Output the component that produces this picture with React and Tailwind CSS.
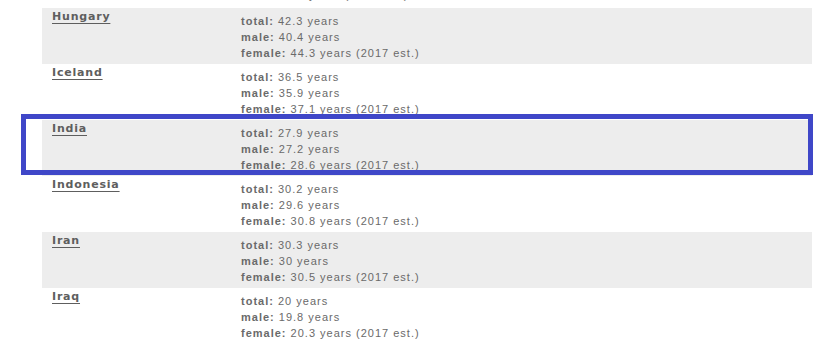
import React from 'react';

const rows = [
  { name: 'Honduras', total: '23.5', male: '23.1', female: '24' },
  { name: 'Hungary', total: '42.3', male: '40.4', female: '44.3' },
  { name: 'Iceland', total: '36.5', male: '35.9', female: '37.1' },
  { name: 'India', total: '27.9', male: '27.2', female: '28.6', marked: true },
  { name: 'Indonesia', total: '30.2', male: '29.6', female: '30.8' },
  { name: 'Iran', total: '30.3', male: '30', female: '30.5' },
  { name: 'Iraq', total: '20', male: '19.8', female: '20.3' },
];

function Line({ label, value, note }) {
  return (
    <div className="h-4 leading-4 whitespace-nowrap">
      <span className="font-bold">{label}:</span> {value} years{note ? ' (2017 est.)' : ''}
    </div>
  );
}

function Row({ row, index }) {
  // rows alternate, starting from white for the clipped one at the top
  const shaded = index % 2 === 1;
  const first = index === 0;
  return (
    <div className={`relative flex h-14 shrink-0 ${shaded ? 'bg-[#ededed]' : 'bg-white'} ${first ? '-mt-12' : ''}`}>
      <div className="w-[199px] pl-[10px] pt-[1px] font-['DejaVu_Sans',Verdana,sans-serif] text-[11px] leading-4">
        <a className="font-bold tracking-[0.8px] text-[#5e5e5e] underline decoration-1 underline-offset-[3px]">
          {row.name}
        </a>
      </div>
      <div className={`${first ? 'pt-[3px]' : 'pt-[5px]'} font-['Liberation_Sans',Arial,sans-serif] text-[11px] tracking-[1px] text-[#6a6a6a]`}>
        <Line label="total" value={row.total} />
        <Line label="male" value={row.male} />
        <Line label="female" value={row.female} note />
      </div>
      {row.marked && (
        <div className="pointer-events-none absolute -left-[21px] -top-[6px] -right-px bottom-px border-[5px] border-[#3f47c8]" />
      )}
    </div>
  );
}

export default function App() {
  return (
    <div className="h-[343px] w-[830px] overflow-hidden bg-white">
      <div className="ml-[42px] flex w-[770px] flex-col">
        {rows.map((row, i) => (
          <Row key={row.name} row={row} index={i} />
        ))}
      </div>
    </div>
  );
}
